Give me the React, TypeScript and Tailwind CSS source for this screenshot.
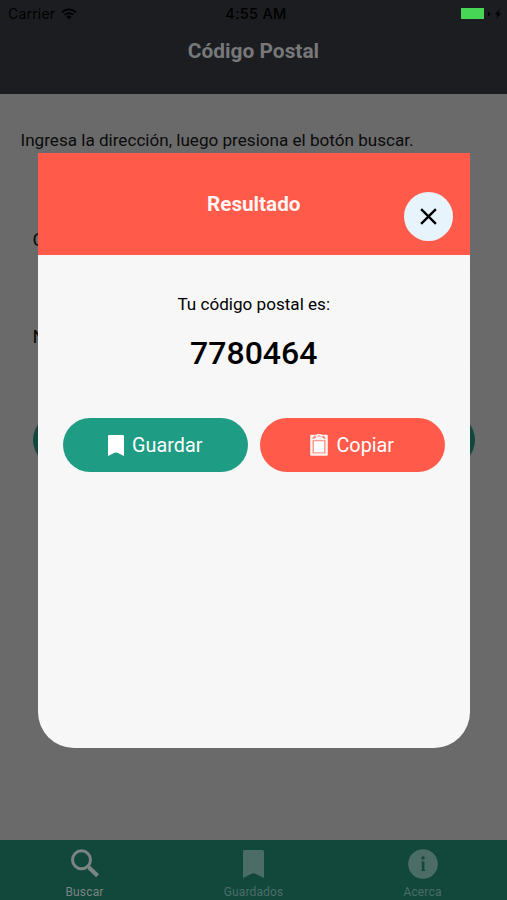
import { useState } from 'react';

type IconProps = { className?: string };

function WifiIcon({ className }: IconProps) {
  return (
    <svg className={className} viewBox="0 0 16 12" fill="none" stroke="currentColor" strokeWidth="1.7">
      <path d="M1 4.3a10 10 0 0 1 14 0" />
      <path d="M3.6 7a6.3 6.3 0 0 1 8.8 0" />
      <path d="M8 11.3 5.4 8.7a3.8 3.8 0 0 1 5.2 0Z" fill="currentColor" stroke="none" />
    </svg>
  );
}

function BoltIcon({ className }: IconProps) {
  return (
    <svg className={className} viewBox="0 0 6 10" fill="currentColor">
      <path d="M4.6 0 0 5.6h2.5L1.4 10 6 4.2H3.5Z" />
    </svg>
  );
}

function SearchIcon({ className }: IconProps) {
  return (
    <svg className={className} viewBox="0 0 30 30" fill="none" stroke="currentColor">
      <circle cx="11.5" cy="10.8" r="9" strokeWidth="3" />
      <path d="m17.4 16.8 2.4 2.2" strokeWidth="3.2" />
      <path d="m19 18.6 8.6 8.2" strokeWidth="4.2" />
    </svg>
  );
}

function BookmarkIcon({ className }: IconProps) {
  return (
    <svg className={className} viewBox="0 0 16 21" fill="currentColor" preserveAspectRatio="none">
      <path d="M1.2 0h13.6Q16 0 16 1.2V21l-6.6-3.2Q8 17.2 6.6 17.8L0 21V1.2Q0 0 1.2 0Z" />
    </svg>
  );
}

function InfoIcon({ className }: IconProps) {
  return (
    <svg className={className} viewBox="0 0 30 30">
      <circle cx="15" cy="15" r="14.8" fill="currentColor" />
      <g fill="#12483c">
        <circle cx="15" cy="9" r="1.7" />
        <path d="M13.2 12.4h3.2v8.4h.7v1.2h-3.9v-1.2h.7v-7.2h-.7Z" />
      </g>
    </svg>
  );
}

function ClipboardIcon({ className }: IconProps) {
  return (
    <svg className={className} viewBox="0 0 18 22">
      <path
        d="M1.2.8h4.2C6.3.8 6.5 0 9 0s2.7.8 3.6.8h4.2q1 0 1 1v18.9q0 1-1 1H1.2q-1 0-1-1V1.8q0-1 1-1Z"
        fill="#fff3f1"
      />
      <path d="M2.6 6.2h12.8v13.2H2.6Z" fill="#ff8679" />
      <path d="M3.8 7.2h10.4v11.2H3.8Z" fill="#fff" />
      <path d="M4.4 1.6 6.6 3 3.2 5.2 2.2 4.4ZM13.6 1.6 11.4 3l3.4 2.2 1-.8Z" fill="#ff8679" />
      <path d="M7.4 2.5Q9 .6 10.6 2.5" fill="none" stroke="#ff8679" strokeWidth="1" />
    </svg>
  );
}

function CloseIcon({ className }: IconProps) {
  return (
    <svg className={className} viewBox="0 0 18 18" fill="none" stroke="currentColor" strokeWidth="2.5">
      <path d="m1.2 1.2 15.6 15.6M16.8 1.2 1.2 16.8" />
    </svg>
  );
}

const tabs = [
  { label: 'Buscar', icon: SearchIcon, iconClass: 'w-[30px] h-[30px]', active: true },
  { label: 'Guardados', icon: BookmarkIcon, iconClass: 'w-[21px] h-[28px]', active: false },
  { label: 'Acerca', icon: InfoIcon, iconClass: 'w-[30px] h-[30px]', active: false },
];

function StatusBar() {
  return (
    <div className="grid grid-cols-3 items-center h-[27px] pl-[8px] pr-[6px] text-black font-['Inter',sans-serif]">
      <div className="flex items-center gap-[6px]">
        <span className="text-[14px] tracking-[0.2px]">Carrier</span>
        <WifiIcon className="w-[16px] h-[12px]" />
      </div>
      <span className="pl-[3px] text-center text-[14.5px] tracking-[0.3px] font-medium whitespace-nowrap">4:55 AM</span>
      <div className="flex items-center justify-end">
        <div className="w-[23px] h-[11px] bg-[#48d656]" />
        <div className="w-[2px] h-[4px] ml-[4px] rounded-r-full bg-black" />
        <BoltIcon className="w-[6px] h-[10px] ml-[5px]" />
      </div>
    </div>
  );
}

function ResultModal({ code, onClose }: { code: string; onClose: () => void }) {
  return (
    <div className="absolute left-[37.5px] top-[153px] w-[432.5px] h-[595px] flex flex-col bg-[#f7f7f7] rounded-b-[36px] overflow-hidden">
      <header className="relative flex justify-center h-[102px] shrink-0 bg-[#ff5a4a]">
        <h2 className="mt-[38px] text-[20.7px] leading-[26px] font-bold text-[#fff5f3]">Resultado</h2>
        <button
          aria-label="Cerrar"
          onClick={onClose}
          className="absolute right-[17px] top-[39px] flex items-center justify-center size-[49px] rounded-full bg-[#e7f4fc] text-black"
        >
          <CloseIcon className="size-[17px]" />
        </button>
      </header>
      <div className="flex flex-col items-center pt-[37px] text-black">
        <p className="text-[17.1px] leading-[24px]">Tu código postal es:</p>
        <p className="mt-[17px] text-[32px] leading-[40px] font-medium">{code}</p>
        <div className="flex gap-[12px] mt-[45px] text-[19.8px] leading-[30px] text-white">
          <button className="flex items-center justify-center gap-[8px] w-[185px] h-[54px] rounded-full bg-[#1f9c84]">
            <BookmarkIcon className="w-[16px] h-[21px]" />
            <span className="pt-px">Guardar</span>
          </button>
          <button className="flex items-center justify-center gap-[8px] w-[185px] h-[54px] rounded-full bg-[#ff5a4a]">
            <ClipboardIcon className="w-[18px] h-[22px]" />
            <span className="pt-px">Copiar</span>
          </button>
        </div>
      </div>
    </div>
  );
}

export default function App() {
  const [open, setOpen] = useState(true);

  return (
    <div className="relative flex flex-col w-[507px] h-[900px] overflow-hidden bg-[#6a6a6a] font-['Roboto',sans-serif]">
      <header className="h-[94px] shrink-0 bg-[#1c1d20]">
        <StatusBar />
        <h1 className="mt-[11px] text-center text-[20.9px] leading-[26px] font-bold text-[#77787a]">Código Postal</h1>
      </header>

      <main className="flex-1 pt-[34px] text-[#0b0b0b]">
        <p className="ml-[20.5px] text-[17.1px] leading-[24px] whitespace-nowrap">
          Ingresa la dirección, luego presiona el botón buscar.
        </p>
        <div className="mx-[32.5px]">
          <div className="mt-[75px] h-[38px] text-[19px] leading-[26px] border-b border-[#676767]">C</div>
          <div className="mt-[59px] h-[38px] text-[19px] leading-[26px] border-b border-[#676767]">N</div>
          <div className="mt-[51px] h-[54px] rounded-full bg-[#12483c]" />
        </div>
      </main>

      <nav className="grid grid-cols-3 h-[60px] shrink-0 bg-[#12483c]">
        {tabs.map(({ label, icon: Icon, iconClass, active }) => (
          <div key={label} className={`flex flex-col items-center ${active ? 'text-[#7b8482]' : 'text-[#4b6d66]'}`}>
            <div className="flex items-center h-[30px] mt-[9px]">
              <Icon className={iconClass} />
            </div>
            <span className="mt-[5px] text-[12px] leading-[16px] tracking-[0.15px]">{label}</span>
          </div>
        ))}
      </nav>

      {open && <ResultModal code="7780464" onClose={() => setOpen(false)} />}
    </div>
  );
}
